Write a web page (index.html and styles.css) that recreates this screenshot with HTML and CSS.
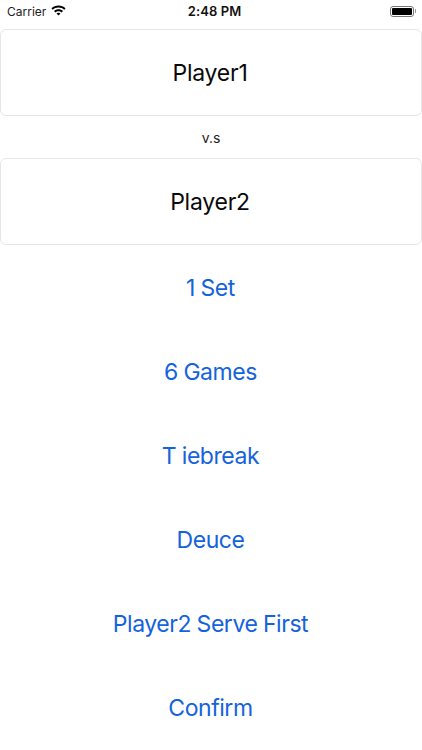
FILE: index.html
```html
<!DOCTYPE html>
<html lang="en">
<head>
<meta charset="utf-8">
<title>Match setup</title>
<link rel="stylesheet" href="styles.css">
</head>
<body>
<div class="status">
  <div class="status-left">
    <span>Carrier</span>
    <svg class="wifi" viewBox="0 0 16 12" width="15" height="11"><path d="M8 .6c2.900 0 5.600 1.100 7.700 3.100l-1.400 1.600C12.600 3.700 10.400 2.800 8 2.800S3.400 3.700 1.700 5.300L.3 3.700C2.400 1.700 5.100.6 8 .6z"/><path d="M8 4.600c1.900 0 3.600.7 4.900 2l-1.500 1.500C10.500 7.200 9.300 6.800 8 6.800s-2.500.4-3.400 1.300L3.100 6.600c1.300-1.300 3-2 4.900-2z"/><path d="M8 8.400c.9 0 1.600.3 2.200.8L8 11.500 5.800 9.200c.6-.5 1.300-.8 2.200-.8z"/></svg>
  </div>
  <div class="status-time">2:48 PM</div>
  <div class="status-right">
    <div class="battery"><div class="battery-fill"></div></div>
    <div class="battery-cap"></div>
  </div>
</div>
<div class="field">Player1</div>
<div class="vs">v.s</div>
<div class="field">Player2</div>
<div class="actions">
  <div class="action">1 Set</div>
  <div class="action">6 Games</div>
  <div class="action">T iebreak</div>
  <div class="action">Deuce</div>
  <div class="action">Player2 Serve First</div>
  <div class="action">Confirm</div>
</div>
</body>
</html>
```
FILE: styles.css
```css
* { box-sizing: border-box; }
html, body { margin: 0; padding: 0; }
body {
  width: 422px;
  height: 750px;
  overflow: hidden;
  background: #fff;
  color: #000;
  font-family: Inter, "Liberation Sans", sans-serif;
}
.status {
  height: 29px;
  display: grid;
  grid-template-columns: 1fr auto 1fr;
  align-items: center;
  padding: 0 6px 7px 7px;
  font-size: 12px;
  color: #222;
}
.status-left { display: flex; align-items: center; gap: 5px; }
.wifi { fill: #000; margin-top: -2px; }
.status-time { margin-left: 6px; font-weight: 600; font-size: 13px; letter-spacing: 0.1px; color: #111; }
.status-right { display: flex; justify-content: flex-end; align-items: center; }
.battery {
  width: 24px;
  height: 11px;
  border: 1px solid #777;
  border-radius: 3px;
  padding: 1px;
}
.battery-fill { width: 100%; height: 100%; background: #000; border-radius: 1px; }
.battery-cap { width: 1.500px; height: 4px; background: #999; margin-left: 1px; }
.field {
  height: 87px;
  border: 1px solid #e6e6e8;
  border-radius: 6px;
  display: flex;
  align-items: center;
  justify-content: center;
  padding-right: 2px;
  font-size: 23px;
  letter-spacing: -0.25px;
  color: #0a0a0a;
}
.vs {
  height: 42px;
  display: flex;
  align-items: center;
  justify-content: center;
  font-size: 14px;
  color: #222;
}
.actions { display: flex; flex-direction: column; padding-top: 1px; }
.action {
  height: 84px;
  display: flex;
  align-items: center;
  justify-content: center;
  padding-right: 1px;
  font-size: 23px;
  letter-spacing: -0.45px;
  word-spacing: -0.5px;
  color: #1463dc;
}
```
